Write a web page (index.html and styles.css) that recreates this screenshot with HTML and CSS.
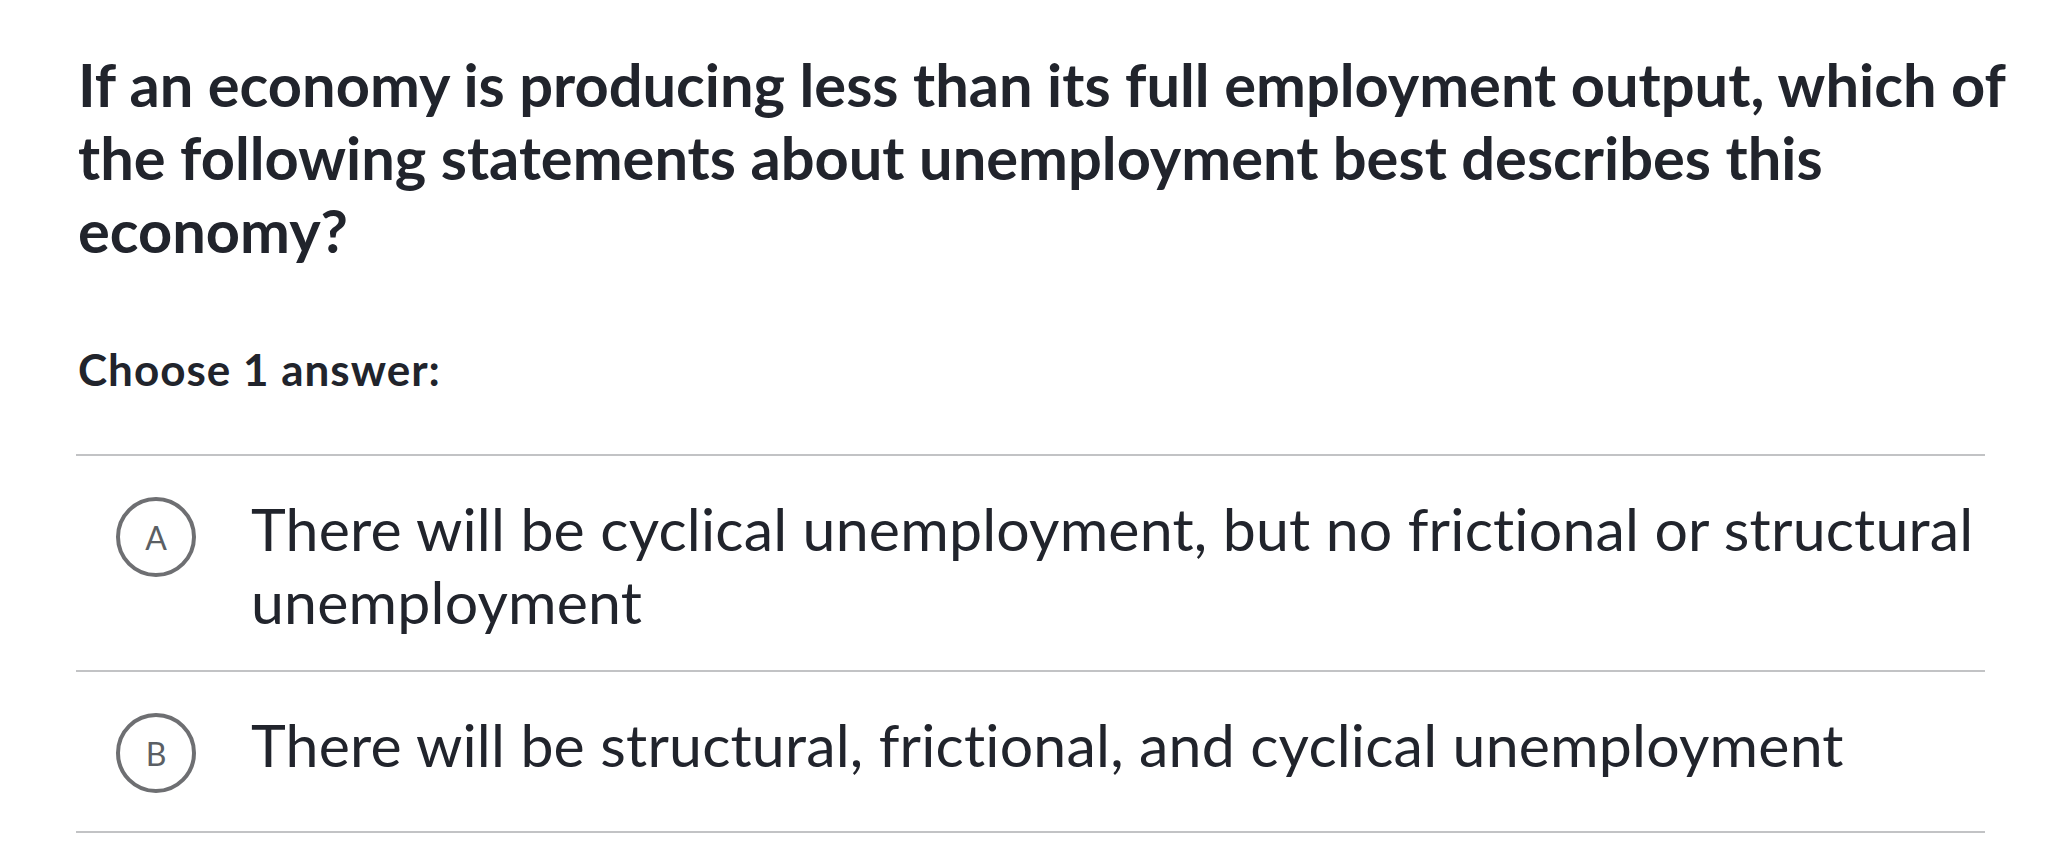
FILE: index.html
```html
<!DOCTYPE html>
<html lang="en">
<head>
<meta charset="utf-8">
<title>Question</title>
<link rel="stylesheet" href="styles.css">
</head>
<body>
<main class="page">
  <h1 class="question">If an economy is producing less than its full employment output, which of the following statements about unemployment best describes this economy?</h1>
  <p class="prompt">Choose 1 answer:</p>
  <ul class="choices">
    <li class="choice choice-a">
      <span class="badge">A</span>
      <span class="choice-text">There will be cyclical unemployment, but no frictional or structural unemployment</span>
    </li>
    <li class="choice choice-b">
      <span class="badge">B</span>
      <span class="choice-text">There will be structural, frictional, and cyclical unemployment</span>
    </li>
  </ul>
</main>
</body>
</html>
```

FILE: styles.css
```css
html, body {
  margin: 0;
  padding: 0;
  background: #ffffff;
}

body {
  font-family: Lato, "Noto Sans", sans-serif;
  color: #21242c;
}

.page {
  padding: 48px 0 0 78px;
}

.question {
  margin: 0;
  max-width: 1960px;
  font-size: 59.6px;
  line-height: 73px;
  font-weight: 700;
}

.prompt {
  margin: 76px 0 0 0;
  font-size: 44px;
  line-height: 52px;
  letter-spacing: 1px;
  font-weight: 700;
}

.choices {
  list-style: none;
  margin: 59px 0 0 -2px;
  padding: 0;
  width: 1909px;
  border-top: 2px solid #c2c3c5;
}

.choice {
  display: flex;
  align-items: flex-start;
  padding: 36px 0 32px 40px;
  border-bottom: 2px solid #c2c3c5;
  box-sizing: border-box;
}

.choice-b {
  min-height: 161px;
}

.badge {
  flex: none;
  width: 80px;
  height: 80px;
  margin-top: 5px;
  box-sizing: border-box;
  border: 4px solid #6e6f72;
  border-radius: 50%;
  display: flex;
  align-items: center;
  justify-content: center;
  font-size: 32px;
  font-weight: 400;
  color: #5b5f64;
}

.choice-text {
  margin-left: 55px;
  font-size: 59px;
  line-height: 73px;
  letter-spacing: 0.2px;
  font-weight: 400;
}
```
